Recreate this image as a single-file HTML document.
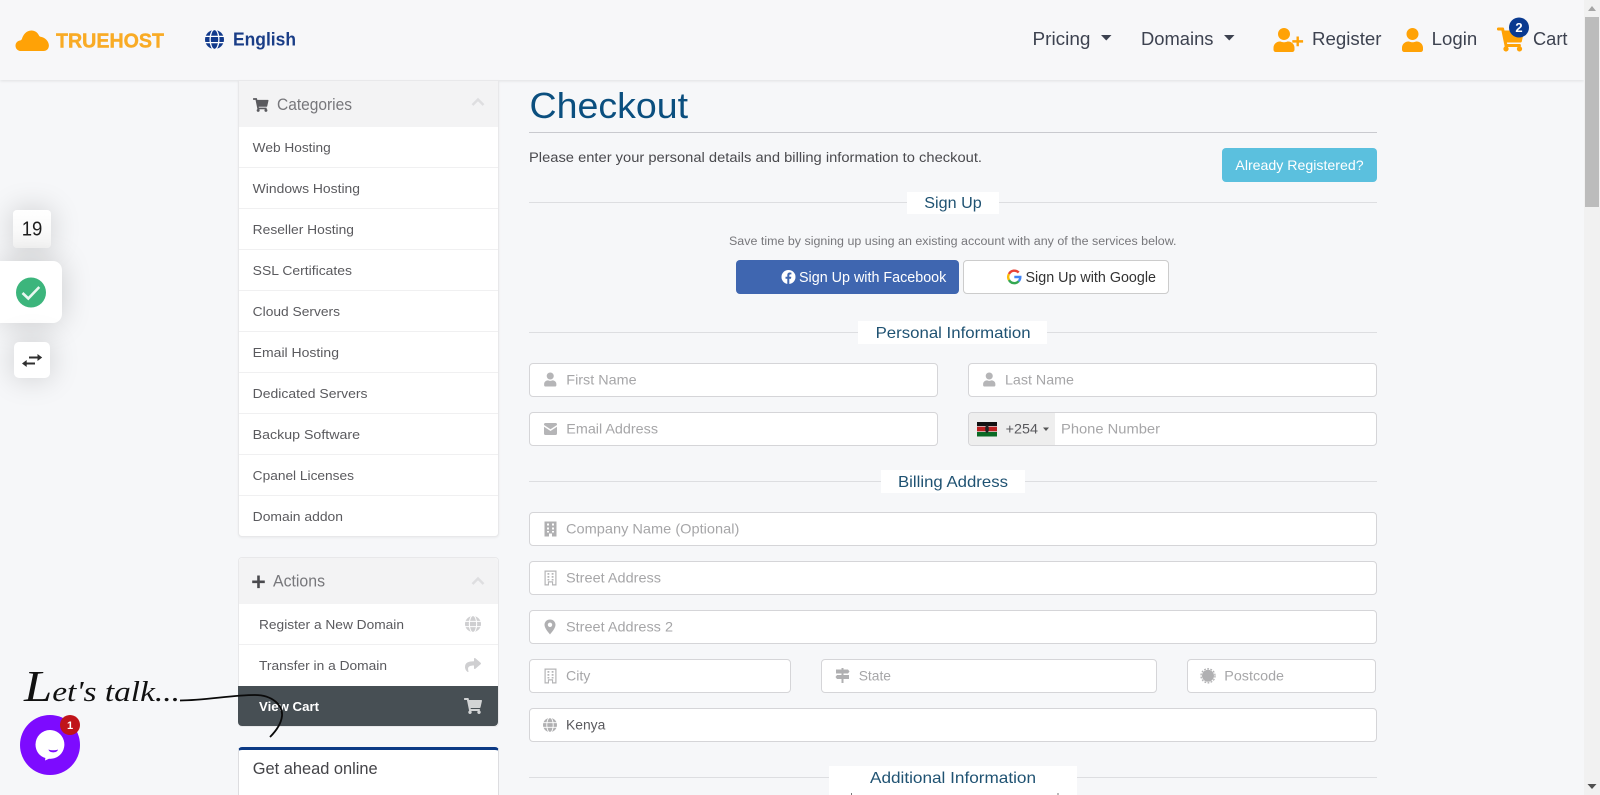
<!DOCTYPE html>
<html lang="en"><head><meta charset="utf-8"><title>Checkout - Truehost</title>
<style>
html,body{margin:0;padding:0;width:1600px;height:795px;overflow:hidden;background:#f6f7f9;font-family:"Liberation Sans",sans-serif}
#root{position:relative;width:1600px;height:795px;overflow:hidden;background:#f6f7f9}
.a{position:absolute;box-sizing:border-box}
.in{position:absolute;box-sizing:border-box;background:#fff;border:1px solid #d5d5d8;border-radius:4px}
.sep{position:absolute;left:239px;width:259px;height:1px;background:#f0f0f1}
.rule{position:absolute;left:529px;width:848px;height:1px;background:#dddee1}
.lab{position:absolute;background:#fff}
svg.o{position:absolute;left:0;top:0}
text{font-family:"Liberation Sans",sans-serif}
.ph{font-size:14px;fill:#a6a6a8}
.it{font-size:13px;fill:#5a5a5e}
.nav{font-size:18px;fill:#3d4250}
.sec{font-size:16px;fill:#1f5272}
</style></head><body><div id="root">

<!-- header -->
<div class="a" style="left:0;top:0;width:1584px;height:80px;background:#f7f7f9;box-shadow:0 1px 3px rgba(0,0,0,.09)"></div>

<!-- scrollbar -->
<div class="a" style="left:1584px;top:0;width:16px;height:795px;background:#f1f1f1"></div>
<div class="a" style="left:1585px;top:17px;width:14px;height:190px;background:#bcbcbc"></div>

<!-- floating left widgets -->
<div class="a" style="left:13px;top:210px;width:38px;height:38px;background:linear-gradient(#fff,#f5f5f5);border-radius:4px;box-shadow:0 0 30px rgba(0,0,0,.18)"></div>
<div class="a" style="left:0;top:261px;width:62px;height:62px;background:#fff;border-radius:0 9px 9px 0;box-shadow:0 0 30px rgba(0,0,0,.18)"></div>
<div class="a" style="left:14px;top:342px;width:36px;height:36px;background:#fff;border-radius:5px;box-shadow:0 0 30px rgba(0,0,0,.18)"></div>

<!-- categories panel -->
<div class="a" style="left:238px;top:80px;width:261px;height:457px;background:#fff;border:1px solid #e8e8ea;border-radius:0 0 4px 4px;box-shadow:0 1px 2px rgba(0,0,0,.05)"></div>
<div class="a" style="left:239px;top:81px;width:259px;height:46px;background:#f3f3f4"></div>
<div class="sep" style="top:167px"></div><div class="sep" style="top:208px"></div><div class="sep" style="top:249px"></div>
<div class="sep" style="top:290px"></div><div class="sep" style="top:331px"></div><div class="sep" style="top:372px"></div>
<div class="sep" style="top:413px"></div><div class="sep" style="top:454px"></div><div class="sep" style="top:495px"></div>

<!-- actions panel -->
<div class="a" style="left:238px;top:557px;width:261px;height:170px;background:#fff;border:1px solid #e8e8ea;border-radius:4px"></div>
<div class="a" style="left:239px;top:558px;width:259px;height:46px;background:#f3f3f4;border-radius:4px 4px 0 0"></div>
<div class="sep" style="top:644px"></div>
<div class="a" style="left:238px;top:686px;width:260px;height:40px;background:#474f54;border-radius:0 0 4px 4px"></div>

<!-- get ahead panel -->
<div class="a" style="left:238px;top:747px;width:261px;height:48px;background:#fff;border:1px solid #dddde0;border-top:3px solid #0c3a85;border-bottom:0;border-radius:4px 4px 0 0"></div>

<!-- main rules -->
<div class="rule" style="top:132px;background:#c9cacf"></div>
<div class="rule" style="top:202px"></div>
<div class="rule" style="top:332px"></div>
<div class="rule" style="top:481px"></div>
<div class="rule" style="top:777px"></div>
<div class="lab" style="left:907px;top:192px;width:92px;height:22px"></div>
<div class="lab" style="left:858px;top:321px;width:189px;height:23px"></div>
<div class="lab" style="left:881px;top:470px;width:144px;height:23px"></div>
<div class="lab" style="left:829px;top:766px;width:248px;height:29px"></div>

<!-- buttons -->
<div class="a" style="left:1222px;top:148px;width:155px;height:34px;background:#5bc0de;border-radius:4px"></div>
<div class="a" style="left:736px;top:260px;width:223px;height:34px;background:#3f66b0;border-radius:4px"></div>
<div class="a" style="left:963px;top:260px;width:206px;height:34px;background:#fff;border:1px solid #ccc;border-radius:4px"></div>

<!-- inputs -->
<div class="in" style="left:529px;top:363px;width:409px;height:34px"></div>
<div class="in" style="left:968px;top:363px;width:409px;height:34px"></div>
<div class="in" style="left:529px;top:412px;width:409px;height:34px"></div>
<div class="in" style="left:968px;top:412px;width:409px;height:34px"></div>
<div class="a" style="left:969px;top:413px;width:86px;height:32px;background:#eee;border-radius:3px 0 0 3px"></div>
<div class="in" style="left:529px;top:512px;width:848px;height:34px"></div>
<div class="in" style="left:529px;top:561px;width:848px;height:34px"></div>
<div class="in" style="left:529px;top:610px;width:848px;height:34px"></div>
<div class="in" style="left:529px;top:659px;width:262px;height:34px"></div>
<div class="in" style="left:821px;top:659px;width:336px;height:34px"></div>
<div class="in" style="left:1187px;top:659px;width:189px;height:34px"></div>
<div class="in" style="left:529px;top:708px;width:848px;height:34px"></div>

<svg class="o" width="1600" height="795" viewBox="0 0 1600 795" xmlns="http://www.w3.org/2000/svg">
<defs>
<symbol id="user" viewBox="0 0 448 512"><path d="M224 256c70.700 0 128-57.300 128-128S294.700 0 224 0 96 57.300 96 128s57.300 128 128 128zm89.600 32h-16.700c-22.200 10.200-46.900 16-72.900 16s-50.600-5.800-72.900-16h-16.700C60.200 288 0 348.200 0 422.400V464c0 26.500 21.500 48 48 48h352c26.500 0 48-21.500 48-48v-41.600c0-74.200-60.200-134.400-134.400-134.400z"/></symbol>
<symbol id="cart" viewBox="0 0 576 512"><path d="M528.120 301.319l47.273-208C578.806 78.301 567.391 64 551.990 64H159.208l-9.166-44.810C147.758 8.021 137.930 0 126.529 0H24C10.745 0 0 10.745 0 24v16c0 13.255 10.745 24 24 24h69.883l70.248 343.435C147.325 417.100 136 435.222 136 456c0 30.928 25.072 56 56 56s56-25.072 56-56c0-15.674-6.447-29.835-16.824-40h209.647C430.447 426.165 424 440.326 424 456c0 30.928 25.072 56 56 56s56-25.072 56-56c0-22.172-12.888-41.332-31.579-50.405l5.517-24.276c3.413-15.018-8.002-29.319-23.403-29.319H218.117l-6.545-32h293.145c11.206 0 20.920-7.754 23.403-18.681z"/></symbol>
<symbol id="share" viewBox="0 0 512 512"><path d="M503.691 189.836L327.687 37.851C312.281 24.546 288 35.347 288 56.015v80.053C127.371 137.907 0 170.100 0 322.326c0 61.441 39.581 122.309 83.333 154.132 13.653 9.931 33.111-2.533 28.077-18.631C66.066 312.814 132.917 274.316 288 272.085V360c0 20.700 24.300 31.453 39.687 18.164l176.004-152c11.071-9.562 11.086-26.753 0-36.328z"/></symbol>
<symbol id="globe" viewBox="0 0 20 20"><circle cx="10" cy="10" r="10"/><g fill="none" stroke="#fff" stroke-width="1.300"><ellipse cx="10" cy="10" rx="4.600" ry="10.500"/><path d="M0 6.700h20M0 13.300h20"/></g></symbol>
<symbol id="bld" viewBox="0 0 12 15"><path fill-rule="evenodd" d="M0 0h12v15H7.500v-3h-3v3H0zM2.500 2v2h2V2zm5 0v2h2V2zM2.500 6v2h2V6zm5 0v2h2V6zM2.500 9.500v1.500h2V9.500zm5 0v1.500h2V9.500z"/></symbol>
<symbol id="bld2" viewBox="0 0 12 15"><path fill-rule="evenodd" d="M0 0h12v15H7.500v-3h-3v3H0zM1.200 1.200v12.600h2.200v-3h5.200v3h2.200V1.200zM3 2.500h1.800v1.800H3zm4.200 0H9v1.800H7.200zM3 5.500h1.800v1.800H3zm4.200 0H9v1.800H7.200zM3 8.500h1.800v1.500H3zm4.200 0H9v1.500H7.200z"/></symbol>
</defs>

<!-- logo -->
<path fill="#ffa206" d="M21 51c-3.200 0-5.500-2.400-5.500-5.300 0-2.700 1.900-4.800 4.400-5.200 1-.2 1.500-.5 2-1.500 1.200-4.300 4.600-8.500 9.400-8.500 3.800 0 6.300 2.100 7.700 5 .3.700.7 1 1.500 1.200 4.400.6 8.400 4.500 8.400 8.800 0 3.300-2.300 5.500-5.400 5.500z"/>
<text x="56" y="47.500" font-size="20" font-weight="700" fill="#f9ab25" stroke="#f9ab25" stroke-width=".4" textLength="108" lengthAdjust="spacingAndGlyphs">TRUEHOST</text>
<use href="#globe" x="205" y="30" width="19" height="19" fill="#123a8c"/>
<text x="233" y="45.500" font-size="18" font-weight="700" fill="#1a3d87" textLength="63" lengthAdjust="spacingAndGlyphs">English</text>

<!-- nav -->
<text class="nav" x="1032.500" y="45" textLength="58" lengthAdjust="spacingAndGlyphs">Pricing</text>
<path d="M1101 35h10.500l-5.250 5.500z" fill="#3d4250"/>
<text class="nav" x="1141" y="45" textLength="72.500" lengthAdjust="spacingAndGlyphs">Domains</text>
<path d="M1224 35h10.500l-5.250 5.500z" fill="#3d4250"/>
<use href="#user" x="1273.500" y="28" width="21" height="24" fill="#ffa206"/>
<path d="M1296.500 36.500h2.400v3.600h4.200v2.500h-4.200v3.600h-2.400v-3.600h-4.200v-2.500h4.200z" fill="#ffa206"/>
<text class="nav" x="1312" y="45" textLength="69.500" lengthAdjust="spacingAndGlyphs">Register</text>
<use href="#user" x="1402" y="28" width="21" height="24" fill="#ffa206"/>
<text class="nav" x="1431.700" y="45" textLength="45.500" lengthAdjust="spacingAndGlyphs">Login</text>
<use href="#cart" x="1497" y="27" width="27" height="25" fill="#ffa206"/>
<circle cx="1519" cy="27.500" r="10" fill="#0a3a90"/>
<text x="1519" y="32" font-size="13" font-weight="700" fill="#fff" text-anchor="middle">2</text>
<text class="nav" x="1533" y="45" textLength="34.500" lengthAdjust="spacingAndGlyphs">Cart</text>

<!-- scrollbar arrows -->
<path d="M1592 6l-4 5h8z" fill="#a5a5a5"/>
<path d="M1587.500 784h9l-4.500 5z" fill="#505050"/>

<!-- left widgets -->
<text x="21.700" y="235.700" font-size="20" fill="#1d1d1d" textLength="20.600" lengthAdjust="spacingAndGlyphs">19</text>
<circle cx="31" cy="292.500" r="15" fill="#3cb57c"/>
<path d="M22.500 293l5.800 5.500 11-11.500" fill="none" stroke="#e9f8f0" stroke-width="2.600"/>
<path d="M29 357.500h9" fill="none" stroke="#2f2f2f" stroke-width="2"/>
<path d="M37.500 354l4.700 3.500-4.700 3.500z" fill="#2f2f2f"/>
<path d="M26 363.500h9" fill="none" stroke="#2f2f2f" stroke-width="2"/>
<path d="M26.700 360l-4.700 3.500 4.700 3.500z" fill="#2f2f2f"/>

<!-- categories -->
<use href="#cart" x="253" y="98" width="15.500" height="14" fill="#5a5a5e"/>
<text x="277" y="110" font-size="17" fill="#77777b" textLength="75" lengthAdjust="spacingAndGlyphs">Categories</text>
<path d="M472.500 105l5.500-5.500 5.500 5.500" fill="none" stroke="#dedee0" stroke-width="2.500"/>
<text class="it" x="252.700" y="152" textLength="78" lengthAdjust="spacingAndGlyphs">Web Hosting</text>
<text class="it" x="252.700" y="193" textLength="107.300" lengthAdjust="spacingAndGlyphs">Windows Hosting</text>
<text class="it" x="252.700" y="234" textLength="101.300" lengthAdjust="spacingAndGlyphs">Reseller Hosting</text>
<text class="it" x="252.700" y="275" textLength="99.300" lengthAdjust="spacingAndGlyphs">SSL Certificates</text>
<text class="it" x="252.700" y="316" textLength="87.300" lengthAdjust="spacingAndGlyphs">Cloud Servers</text>
<text class="it" x="252.700" y="357" textLength="86.300" lengthAdjust="spacingAndGlyphs">Email Hosting</text>
<text class="it" x="252.700" y="398" textLength="114.800" lengthAdjust="spacingAndGlyphs">Dedicated Servers</text>
<text class="it" x="252.700" y="439" textLength="107.300" lengthAdjust="spacingAndGlyphs">Backup Software</text>
<text class="it" x="252.700" y="480" textLength="101.300" lengthAdjust="spacingAndGlyphs">Cpanel Licenses</text>
<text class="it" x="252.700" y="521" textLength="90.300" lengthAdjust="spacingAndGlyphs">Domain addon</text>

<!-- actions -->
<path d="M257.200 575.500h2.600v5h5v2.600h-5v5h-2.600v-5h-5v-2.600h5z" fill="#4a4a4e"/>
<text x="273" y="586.500" font-size="17" fill="#77777b" textLength="52" lengthAdjust="spacingAndGlyphs">Actions</text>
<path d="M472.500 584l5.500-5.500 5.500 5.500" fill="none" stroke="#dedee0" stroke-width="2.500"/>
<text class="it" x="259" y="629" textLength="145" lengthAdjust="spacingAndGlyphs">Register a New Domain</text>
<use href="#globe" x="465" y="616" width="16" height="16" fill="#cfcfd1"/>
<text class="it" x="259" y="670" textLength="128" lengthAdjust="spacingAndGlyphs">Transfer in a Domain</text>
<use href="#share" x="465" y="657" width="16" height="16" fill="#cfcfd1"/>
<text x="259" y="711" font-size="13" font-weight="700" fill="#fff" textLength="60" lengthAdjust="spacingAndGlyphs">View Cart</text>
<use href="#cart" x="464" y="698" width="18" height="16" fill="#d2d4d5"/>

<text x="252.700" y="774" font-size="16.500" fill="#444448" textLength="125" lengthAdjust="spacingAndGlyphs">Get ahead online</text>

<!-- main -->
<text x="529.500" y="118" font-size="36" fill="#0b4f7f" textLength="158.500" lengthAdjust="spacingAndGlyphs">Checkout</text>
<text x="529" y="162" font-size="13.500" fill="#4a4a4e" textLength="453" lengthAdjust="spacingAndGlyphs">Please enter your personal details and billing information to checkout.</text>
<text x="1235.400" y="170" font-size="14" fill="#fff" textLength="128.200" lengthAdjust="spacingAndGlyphs">Already Registered?</text>

<text class="sec" x="924.300" y="208" textLength="57.400" lengthAdjust="spacingAndGlyphs">Sign Up</text>
<text x="729" y="245" font-size="11.500" fill="#77777b" textLength="447.500" lengthAdjust="spacingAndGlyphs">Save time by signing up using an existing account with any of the services below.</text>

<circle cx="788.500" cy="277" r="7" fill="#fff"/>
<path d="M787.300 284v-5.300h-1.800v-2h1.800v-1.500c0-1.800 1-2.700 2.600-2.700l1.500.1v1.800h-1c-.8 0-1.100.5-1.100 1.100v1.200h2l-.3 2h-1.700v5.300z" fill="#3f66b0"/>
<text x="799" y="282" font-size="14.500" fill="#fff" textLength="147.300" lengthAdjust="spacingAndGlyphs">Sign Up with Facebook</text>

<g fill="none" stroke-width="2.400">
<path d="M1018.700 272.500a6 6 0 0 0-9.700 1.500" stroke="#ea4335"/>
<path d="M1009 274a6 6 0 0 0 0 6" stroke="#fbbc05"/>
<path d="M1009 280a6 6 0 0 0 9.700 1.200" stroke="#34a853"/>
<path d="M1018.700 281.200a6 6 0 0 0 1.600-4.200h-6" stroke="#4285f4"/>
</g>
<text x="1025.500" y="282" font-size="14.500" fill="#333" textLength="130.500" lengthAdjust="spacingAndGlyphs">Sign Up with Google</text>

<text class="sec" x="875.600" y="338" textLength="155" lengthAdjust="spacingAndGlyphs">Personal Information</text>
<use href="#user" x="544" y="372.500" width="12.500" height="14" fill="#b5b5b7"/>
<text class="ph" x="566.300" y="384.500" textLength="70.300" lengthAdjust="spacingAndGlyphs">First Name</text>
<use href="#user" x="983" y="372.500" width="12.500" height="14" fill="#b5b5b7"/>
<text class="ph" x="1005" y="384.500" textLength="69" lengthAdjust="spacingAndGlyphs">Last Name</text>

<path d="M544 424.500a1.500 1.500 0 0 1 1.500-1.500h10a1.500 1.500 0 0 1 1.500 1.500v.5l-6.500 4.200-6.500-4.200zM544 426.800l6.500 4.200 6.500-4.200v6.700a1.500 1.500 0 0 1-1.500 1.500h-10a1.500 1.500 0 0 1-1.500-1.500z" fill="#b5b5b7"/>
<text class="ph" x="566.300" y="433.500" textLength="91.700" lengthAdjust="spacingAndGlyphs">Email Address</text>

<!-- Kenya flag -->
<rect x="977" y="422" width="20" height="4.500" fill="#111"/>
<rect x="977" y="426.500" width="20" height="5" fill="#bb1f1f"/>
<rect x="977" y="431.500" width="20" height="5" fill="#0a6a25"/>
<rect x="977" y="426" width="20" height=".7" fill="#ddd"/>
<rect x="977" y="431.300" width="20" height=".7" fill="#ddd"/>
<ellipse cx="987" cy="429" rx="1.800" ry="4" fill="#222"/>
<text x="1005.700" y="433.300" font-size="14" fill="#58585c" textLength="32.300" lengthAdjust="spacingAndGlyphs">+254</text>
<path d="M1043 427.500h6l-3 3.500z" fill="#555"/>
<text class="ph" x="1061" y="433.500" textLength="99" lengthAdjust="spacingAndGlyphs">Phone Number</text>

<text class="sec" x="898" y="487" textLength="110" lengthAdjust="spacingAndGlyphs">Billing Address</text>

<use href="#bld" x="544.500" y="521.500" width="12" height="15" fill="#b0b0b2"/>
<text class="ph" x="566" y="533.500" textLength="173.300" lengthAdjust="spacingAndGlyphs">Company Name (Optional)</text>
<use href="#bld2" x="544.500" y="570.500" width="12" height="15" fill="#b5b5b7"/>
<text class="ph" x="566" y="582.500" textLength="95" lengthAdjust="spacingAndGlyphs">Street Address</text>
<path d="M550 619.500c-3.100 0-5.500 2.400-5.500 5.300 0 3.500 3.800 7.500 5.500 9.700 1.700-2.200 5.500-6.200 5.500-9.700 0-2.900-2.400-5.300-5.500-5.300zm0 7.500a2.200 2.200 0 1 1 0-4.400 2.200 2.200 0 0 1 0 4.400z" fill="#b0b0b2"/>
<text class="ph" x="566" y="631.500" textLength="107" lengthAdjust="spacingAndGlyphs">Street Address 2</text>
<use href="#bld2" x="544.500" y="668.500" width="12" height="15" fill="#b5b5b7"/>
<text class="ph" x="566" y="680.500" textLength="24.400" lengthAdjust="spacingAndGlyphs">City</text>
<path d="M841.500 668h2v1.500h4.500l1.500 2-1.500 2h-4.500v1.500h5.500v4h-5.500v4h-2v-4h-4.500l-1.500-2 1.500-2h4.500v-1.500h-5.500v-4h5.500z" fill="#b0b0b2"/>
<text class="ph" x="858.700" y="680.500" textLength="32.300" lengthAdjust="spacingAndGlyphs">State</text>
<circle cx="1208" cy="675.800" r="6" fill="#b0b0b2"/>
<circle cx="1208" cy="675.800" r="7" fill="none" stroke="#b0b0b2" stroke-width="1.300" stroke-dasharray="1.800 1.400"/>
<text class="ph" x="1224.300" y="680.500" textLength="59.700" lengthAdjust="spacingAndGlyphs">Postcode</text>
<use href="#globe" x="543" y="718" width="14" height="14" fill="#b0b0b2"/>
<text x="566" y="729.500" font-size="14" fill="#5a5a5e" textLength="39.300" lengthAdjust="spacingAndGlyphs">Kenya</text>

<text class="sec" x="870" y="783" textLength="166" lengthAdjust="spacingAndGlyphs">Additional Information</text>
<rect x="851" y="793" width="1" height="2" fill="#777"/>
<rect x="1057.500" y="793" width="1" height="2" fill="#777"/>

<!-- chat widget -->
<text x="24" y="701" fill="#111" font-size="29" font-style="italic" textLength="156" lengthAdjust="spacingAndGlyphs" style="font-family:'Liberation Serif',serif"><tspan font-size="44">L</tspan>et's talk...</text>
<path d="M180 700.500C205 700.500 232 695 255 695C272 695 283 705 282 716C281 725 275 732 270 737" fill="none" stroke="#0a0a0a" stroke-width="1.800"/>
<circle cx="50" cy="745" r="30" fill="#7d0bff"/>
<path d="M50 730a14.500 14.500 0 0 1 8 26.500c-2.500 1.700-6 2.500-9 2.300L45 760.500l.4-2.500C39.500 756.500 35.500 751 35.500 744.500A14.500 14.500 0 0 1 50 730z" fill="#fff"/>
<path d="M48.500 749.500c2.500 1 7 1 9.500 0-.6 3.800-8.900 3.800-9.500 0z" fill="#7d0bff"/>
<circle cx="70" cy="725" r="10" fill="#c0141a"/>
<text x="70" y="729" font-size="11" font-weight="700" fill="#fff" text-anchor="middle">1</text>
</svg>
</div></body></html>
